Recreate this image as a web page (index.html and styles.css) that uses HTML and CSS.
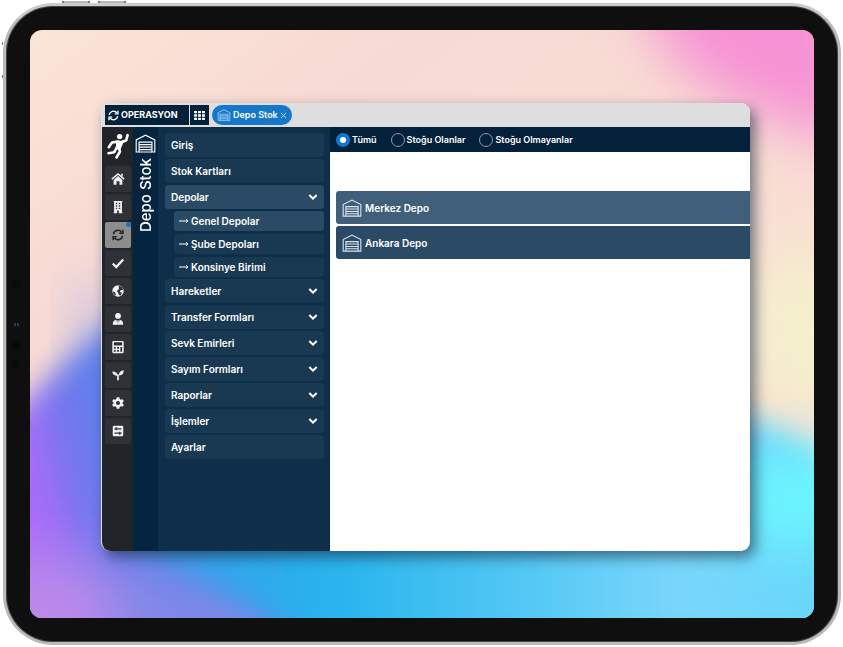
FILE: index.html
```html
<!DOCTYPE html>
<html lang="tr">
<head>
<meta charset="utf-8">
<meta name="viewport" content="width=device-width, initial-scale=1">
<title>Depo Stok</title>
<link rel="stylesheet" href="styles.css">
</head>
<body>
<svg class="symbols" aria-hidden="true">
  <symbol id="warehouse" viewBox="0 0 22 20">
    <path d="M1.200 19V6.200L11 1.200l9.800 5V19h-3V8.500H4.200V19z"/>
    <path d="M4.200 11.200h13.600M4.200 13.800h13.600M4.200 16.400h13.600M4.200 19h13.600"/>
  </symbol>
  <symbol id="sync" viewBox="0 0 16 16">
    <path d="M1.800 7a6.300 6.300 0 0 1 11-3M14.500 1v4.700H9.800M14.200 9a6.300 6.300 0 0 1-11 3M1.500 15v-4.700h4.700"/>
  </symbol>
  <symbol id="chevron" viewBox="0 0 10 8">
    <path d="M1.300 2 5 5.700 8.700 2"/>
  </symbol>
</svg>

<main class="device">
  <span class="key key-up"></span>
  <span class="key key-down"></span>
  <span class="pin pin-top"></span>
  <span class="pin pin-bottom"></span>
  <span class="sensor sensor-a"></span>
  <span class="sensor sensor-light"></span>
  <span class="sensor sensor-b"></span>
  <span class="sensor sensor-c"></span>

  <div class="screen">
    <svg class="wallpaper" viewBox="30 30 784 588" preserveAspectRatio="none" aria-hidden="true">
      <defs>
        <linearGradient id="base" x1="0" y1="0" x2="1" y2="1">
          <stop offset="0" stop-color="#fae5d6"/>
          <stop offset=".25" stop-color="#f8dad4"/>
          <stop offset="1" stop-color="#f8e2d2"/>
        </linearGradient>
        <linearGradient id="violet" gradientUnits="userSpaceOnUse" x1="30" y1="480" x2="110" y2="460">
          <stop offset="0" stop-color="#ab6cf9"/>
          <stop offset=".5" stop-color="#7a74f0"/>
          <stop offset="1" stop-color="#6080ea"/>
        </linearGradient>
        <linearGradient id="sea" gradientUnits="userSpaceOnUse" x1="130" y1="0" x2="814" y2="0">
          <stop offset="0" stop-color="#4a98e8"/>
          <stop offset=".15" stop-color="#31a6eb"/>
          <stop offset=".3" stop-color="#28b4ed"/>
          <stop offset=".55" stop-color="#4fc6f4"/>
          <stop offset=".8" stop-color="#7ad6fb"/>
          <stop offset="1" stop-color="#68d6fb"/>
        </linearGradient>
        <filter id="b12" x="-50%" y="-50%" width="200%" height="200%"><feGaussianBlur stdDeviation="14"/></filter>
        <filter id="b30" x="-50%" y="-50%" width="200%" height="200%"><feGaussianBlur stdDeviation="28"/></filter>
      </defs>
      <rect x="30" y="30" width="784" height="588" fill="url(#base)"/>
      <path filter="url(#b30)" fill="#f693d4" d="M640-40C640 60 700 100 860 150V-40z"/>
      <ellipse filter="url(#b30)" cx="800" cy="330" rx="60" ry="80" fill="#f5efcd"/>
      <ellipse filter="url(#b30)" cx="100" cy="330" rx="25" ry="50" fill="#c5c0e2"/>
      <path filter="url(#b12)" fill="url(#violet)" d="M-20 440C20 420 45 370 110 325L400 300V700H-20z"/>
      <ellipse filter="url(#b30)" cx="150" cy="625" rx="150" ry="60" fill="#8088e8"/>
      <ellipse filter="url(#b30)" cx="40" cy="625" rx="80" ry="70" fill="#be88ea"/>
      <path filter="url(#b12)" fill="url(#sea)" d="M130 530C150 565 230 590 300 640V700H880V500C830 480 800 425 740 418H400V530z"/>
      <ellipse filter="url(#b30)" cx="800" cy="500" rx="70" ry="50" fill="#6cf6ff"/>
    </svg>

    <section class="app">
      <header class="topbar">
        <button class="module" type="button"><svg class="icon-module stroke"><use href="#sync"/></svg>OPERASYON</button>
        <button class="grid-button" type="button" aria-label="Modüller">
          <svg viewBox="0 0 12 10" class="icon-grid"><path d="M0 0h3.200v2.600H0zM4.400 0h3.200v2.600H4.400zM8.800 0H12v2.600H8.800zM0 3.700h3.200v2.600H0zM4.400 3.700h3.200v2.600H4.400zM8.800 3.700H12v2.600H8.800zM0 7.400h3.200V10H0zM4.400 7.400h3.200V10H4.400zM8.800 7.400H12V10H8.800z"/></svg>
        </button>
        <div class="tab">
          <svg class="icon-tab line"><use href="#warehouse"/></svg>
          <span>Depo Stok</span>
          <button class="close" type="button" aria-label="Kapat"><svg viewBox="0 0 8 8"><path d="m1 1 6 6M7 1 1 7"/></svg></button>
        </div>
      </header>

      <div class="body">
        <nav class="rail" aria-label="Modüller">
          <svg class="logo" viewBox="0 0 22 26" aria-hidden="true">
            <circle cx="12.600" cy="3.600" r="2.700"/>
            <path class="limbs" d="M20.600 2.200 19.300 7.200 14.500 9.200M11 8.600 5 9.500 1.800 14.200M14 9.500 11.500 15.500M11.800 14.500 13 18.500 9.500 24.500M9.500 15 7.200 19.200 1.500 20.200"/>
            <path d="M9.500 7.500 17 8 13.500 16.500 8.500 16z"/>
          </svg>
          <a class="rail-link" href="#" aria-label="Ana sayfa"><svg viewBox="0 0 16 16"><path d="M8 4.600 13 9v5.500H9.700V10.500H6.300v4H3V9z"/><path class="cut" d="M1 8.200 8 2.200l7 6"/><path d="M11.500 2h2v3.500l-2-1.700z"/></svg></a>
          <a class="rail-link" href="#" aria-label="Firma"><svg viewBox="0 0 16 16"><path fill-rule="evenodd" d="M3 1h10v1h-.5v12h.5v1H9v-3H7v3H3v-1h.5V2H3zM5.500 3.200v1.600h1.600V3.200zM8.900 3.200v1.600h1.600V3.200zM5.500 6v1.600h1.600V6zM8.900 6v1.600h1.600V6zM5.500 8.800v1.600h1.600V8.800zM8.900 8.800v1.600h1.600V8.800z"/></svg></a>
          <a class="rail-link active" href="#" aria-label="Operasyon"><svg class="stroke icon-sync"><use href="#sync"/></svg><span class="dot"></span></a>
          <a class="rail-link" href="#" aria-label="Görevler"><svg viewBox="0 0 16 16"><path class="thick" d="m2 8.600 4 4L14 4"/></svg></a>
          <a class="rail-link" href="#" aria-label="Dünya"><svg viewBox="0 0 16 16"><circle cx="8" cy="8" r="6.500"/><path class="hole" d="M9 1.800 12.500 3.500 14 6.500l-3 .5-1 2 2.500 1-1.500 3-2-.5L8 9.500 6.500 8 9 6zM2 8.500l2.500.8 1 2.200L5 13.500 3 11.500z"/></svg></a>
          <a class="rail-link" href="#" aria-label="Personel"><svg viewBox="0 0 16 16"><circle cx="8" cy="4.500" r="3.300"/><path d="M2 14.500c0-3.800 1.500-5.300 4-5.700L7.500 13 7.200 9.500h1.600L8.500 13 10 8.800c2.500.4 4 1.900 4 5.700z"/></svg></a>
          <a class="rail-link" href="#" aria-label="Hesap"><svg viewBox="0 0 16 16"><path fill-rule="evenodd" d="M2.500 1h11l1 1v12l-1 1h-11l-1-1V2zM3.300 2.700v3.500h9.400V2.700zM3.300 8v1.900h2.100V8zM7 8v1.900h2.100V8zM10.700 8v5.300h2V8zM3.300 11.500v1.800h2.100v-1.800zM7 11.500v1.800h2.100v-1.800z"/></svg></a>
          <a class="rail-link" href="#" aria-label="Tarım"><svg viewBox="0 0 16 16"><path d="M1.500 4c4 0 6.200 1.800 6.500 5C4 9 1.700 7.500 1.500 4zM14.500 2.500c0 4-1.500 5.700-5.500 6C9 4.800 11 2.700 14.500 2.500z"/><path d="M7 7.500h2V14H7z"/></svg></a>
          <a class="rail-link" href="#" aria-label="Ayarlar"><svg viewBox="0 0 16 16"><path fill-rule="evenodd" d="M6.500 1.500h3l.4 2 1.400.8 2-.7 1.400 2.400-1.600 1.300v1.400l1.600 1.300-1.400 2.400-2-.7-1.400.8-.4 2h-3l-.4-2-1.400-.8-2 .7L1.300 10l1.600-1.300V7.300L1.300 6l1.400-2.400 2 .7 1.400-.8zM8 5.700a2.300 2.300 0 1 0 0 4.600 2.300 2.300 0 0 0 0-4.600z"/></svg></a>
          <a class="rail-link" href="#" aria-label="Tercihler"><svg viewBox="0 0 16 16"><rect x="2" y="2" width="12" height="12" rx="1.500"/><path class="slot" d="M4 5.500h8M4 10.500h8M6 3.800v3.400M10 8.800v3.400"/></svg></a>
        </nav>

        <div class="strip">
          <svg class="icon-strip line"><use href="#warehouse"/></svg>
          <h1>Depo Stok</h1>
        </div>

        <nav class="menu" aria-label="Depo Stok">
          <a class="item" href="#">Giriş</a>
          <a class="item" href="#">Stok Kartları</a>
          <button class="item open" type="button">Depolar<svg class="chevron"><use href="#chevron"/></svg></button>
          <div class="submenu">
            <a class="item sub open" href="#"><svg class="arrow" viewBox="0 0 10 8"><path d="M0 4h9M7 2.300 9 4 7 5.700"/></svg>Genel Depolar</a>
            <a class="item sub" href="#"><svg class="arrow" viewBox="0 0 10 8"><path d="M0 4h9M7 2.300 9 4 7 5.700"/></svg>Şube Depoları</a>
            <a class="item sub" href="#"><svg class="arrow" viewBox="0 0 10 8"><path d="M0 4h9M7 2.300 9 4 7 5.700"/></svg>Konsinye Birimi</a>
          </div>
          <button class="item" type="button">Hareketler<svg class="chevron"><use href="#chevron"/></svg></button>
          <button class="item" type="button">Transfer Formları<svg class="chevron"><use href="#chevron"/></svg></button>
          <button class="item" type="button">Sevk Emirleri<svg class="chevron"><use href="#chevron"/></svg></button>
          <button class="item" type="button">Sayım Formları<svg class="chevron"><use href="#chevron"/></svg></button>
          <button class="item" type="button">Raporlar<svg class="chevron"><use href="#chevron"/></svg></button>
          <button class="item" type="button">İşlemler<svg class="chevron"><use href="#chevron"/></svg></button>
          <a class="item" href="#">Ayarlar</a>
        </nav>

        <div class="content">
          <form class="filters">
            <label><input type="radio" name="stok" checked>Tümü</label>
            <label><input type="radio" name="stok">Stoğu Olanlar</label>
            <label><input type="radio" name="stok">Stoğu Olmayanlar</label>
          </form>
          <div class="cards">
            <a class="card light" href="#"><svg class="icon-card line"><use href="#warehouse"/></svg>Merkez Depo</a>
            <a class="card" href="#"><svg class="icon-card line"><use href="#warehouse"/></svg>Ankara Depo</a>
          </div>
        </div>
      </div>
    </section>
  </div>
</main>
</body>
</html>
```

FILE: styles.css
```css
* { box-sizing: border-box; }

body {
  margin: 0;
  min-height: 100vh;
  padding: 3px 2px 2px 3px;
  display: flex;
  background: #fff;
  font: 600 10px/12px Inter, "Open Sans", sans-serif;
  color: #fff;
}

a { color: inherit; text-decoration: none; }

button {
  margin: 0;
  border: 0;
  padding: 0;
  background: none;
  color: inherit;
  font: inherit;
  text-align: left;
}

svg { display: block; flex: none; fill: currentColor; }
.symbols { position: absolute; width: 0; height: 0; }
.line { fill: none; stroke: currentColor; stroke-width: 1.2; }
.stroke { fill: none; stroke: currentColor; stroke-width: 2; }

/* Tablet frame */
.device {
  position: relative;
  flex: 1;
  display: flex;
  border: 3px solid #b9bbbb;
  border-top-color: #c9cccc;
  border-radius: 50px;
  padding: 24px;
  background: #0f0f0f;
  box-shadow: inset 0 0 0 1px #444;
}

.key {
  position: absolute;
  top: -5px;
  width: 28px;
  height: 2px;
  background: #b5b8ba;
  border: solid #778;
  border-width: 0 2px;
}
.key-up { left: 56px; }
.key-down { left: 92px; }

.pin {
  position: absolute;
  left: -4px;
  width: 1px;
  height: 3px;
  background: #777;
}
.pin-top { top: 36px; }
.pin-bottom { top: 69px; }

.sensor {
  position: absolute;
  left: 5px;
  width: 10px;
  height: 10px;
  border-radius: 50%;
  background: #0a0a0a;
}
.sensor-a { top: 273px; }
.sensor-b { top: 334px; }
.sensor-c { top: 354px; width: 8px; height: 8px; }
.sensor-light {
  top: 317px;
  left: 8px;
  width: 5px;
  height: 3px;
  border-radius: 0;
  border: solid #1b3d66;
  border-width: 0 2px;
}

.screen {
  position: relative;
  flex: 1;
  display: flex;
  padding: 73px 64px 67px 71px;
  border-radius: 12px;
  overflow: hidden;
}

.wallpaper { position: absolute; inset: 0; width: 100%; height: 100%; }

/* Application window */
.app {
  position: relative;
  flex: 1;
  min-width: 0;
  display: flex;
  flex-direction: column;
  border-left: 1px solid #e0e0e0;
  border-radius: 9px;
  overflow: hidden;
  background: #fff;
  box-shadow: 5px 6px 14px rgba(20, 40, 60, .6);
}

.topbar {
  display: flex;
  height: 24px;
  padding: 2px 3px;
  background: #dedede;
  font-size: 9px;
}

.module, .grid-button { display: flex; align-items: center; background: #04213c; }
.module { width: 84px; gap: 2px; padding-left: 3px; font-weight: 700; }
.grid-button { width: 19px; margin-left: 1px; justify-content: center; }
.icon-module { width: 11px; height: 11px; }
.icon-grid { width: 11px; height: 9px; }

.tab {
  display: flex;
  align-items: center;
  gap: 2px;
  margin-left: 3px;
  padding: 0 5px;
  border-radius: 10px;
  background: #1577ca;
}
.icon-tab { width: 14px; height: 12px; color: #b9dcfa; }
.close svg { width: 7px; height: 7px; fill: none; stroke: #d5e9fa; }

.body { flex: 1; display: flex; }

.rail {
  display: flex;
  flex-direction: column;
  gap: 2px;
  width: 31px;
  padding: 6px 2px 6px 3px;
  background: #212529;
}
.logo { width: 22px; height: 26px; margin: 0 2px 5px; }
.limbs { fill: none; stroke: #fff; stroke-width: 2.6; stroke-linecap: round; stroke-linejoin: round; }
.rail-link {
  position: relative;
  display: flex;
  align-items: center;
  justify-content: center;
  height: 26px;
  border-radius: 2px;
  background: #2e3237;
  color: #f1f1f1;
}
.rail-link svg { width: 14px; height: 14px; }
.rail-link .icon-sync { width: 12px; height: 12px; }
.rail-link.active { background: #8d8d8d; color: #212529; }
.dot {
  position: absolute;
  top: 0;
  right: 0;
  width: 5px;
  height: 5px;
  border-radius: 50%;
  background: #1577ca;
}
.cut { fill: none; stroke: #f1f1f1; stroke-width: 1.8; }
.thick { fill: none; stroke: #f1f1f1; stroke-width: 2.6; }
.hole { fill: #2e3237; }
.slot { stroke: #2e3237; stroke-width: 1.5; }

.strip {
  display: flex;
  flex-direction: column;
  align-items: center;
  width: 25px;
  padding-top: 7px;
  gap: 5px;
  background: #05243f;
}
.icon-strip { width: 21px; height: 19px; }
.strip h1 {
  margin: 0;
  font-size: 15px;
  line-height: 20px;
  font-weight: 500;
  writing-mode: vertical-rl;
  transform: rotate(180deg);
}

.menu {
  display: flex;
  flex-direction: column;
  gap: 2px;
  width: 172px;
  padding: 6px 6px 6px 7px;
  background: #0f2e4a;
}
.item {
  display: flex;
  align-items: center;
  height: 24px;
  padding: 0 6px;
  border-radius: 3px;
  background: #193852;
}
.item.open { background: #2b4a66; }
.submenu { display: flex; flex-direction: column; gap: 3px; padding-left: 9px; }
.sub { height: 20px; gap: 2px; padding: 0 5px; }
.arrow { width: 10px; height: 8px; fill: none; stroke: #fff; }
.chevron {
  width: 10px;
  height: 8px;
  margin-left: auto;
  fill: none;
  stroke: #fff;
  stroke-width: 2;
}

.content { flex: 1; min-width: 0; }
.filters {
  display: flex;
  align-items: center;
  gap: 14px;
  height: 25px;
  padding-left: 6px;
  background: #04213c;
  font-size: 9px;
}
.filters label { display: flex; align-items: center; gap: 2px; }
.filters input {
  appearance: none;
  width: 14px;
  height: 14px;
  margin: 0;
  border: 1px solid #8b98a5;
  border-radius: 50%;
}
.filters input:checked {
  border: 4px solid #1577ca;
  background: #fff;
}

.cards {
  display: flex;
  flex-direction: column;
  gap: 2px;
  padding: 39px 0 0 6px;
}
.card {
  display: flex;
  align-items: center;
  gap: 3px;
  height: 33px;
  padding-left: 6px;
  border-radius: 3px 0 0 3px;
  background: #2b4a66;
}
.card.light { background: #405f7a; }
.icon-card { width: 20px; height: 18px; color: #dce6ef; }
```
